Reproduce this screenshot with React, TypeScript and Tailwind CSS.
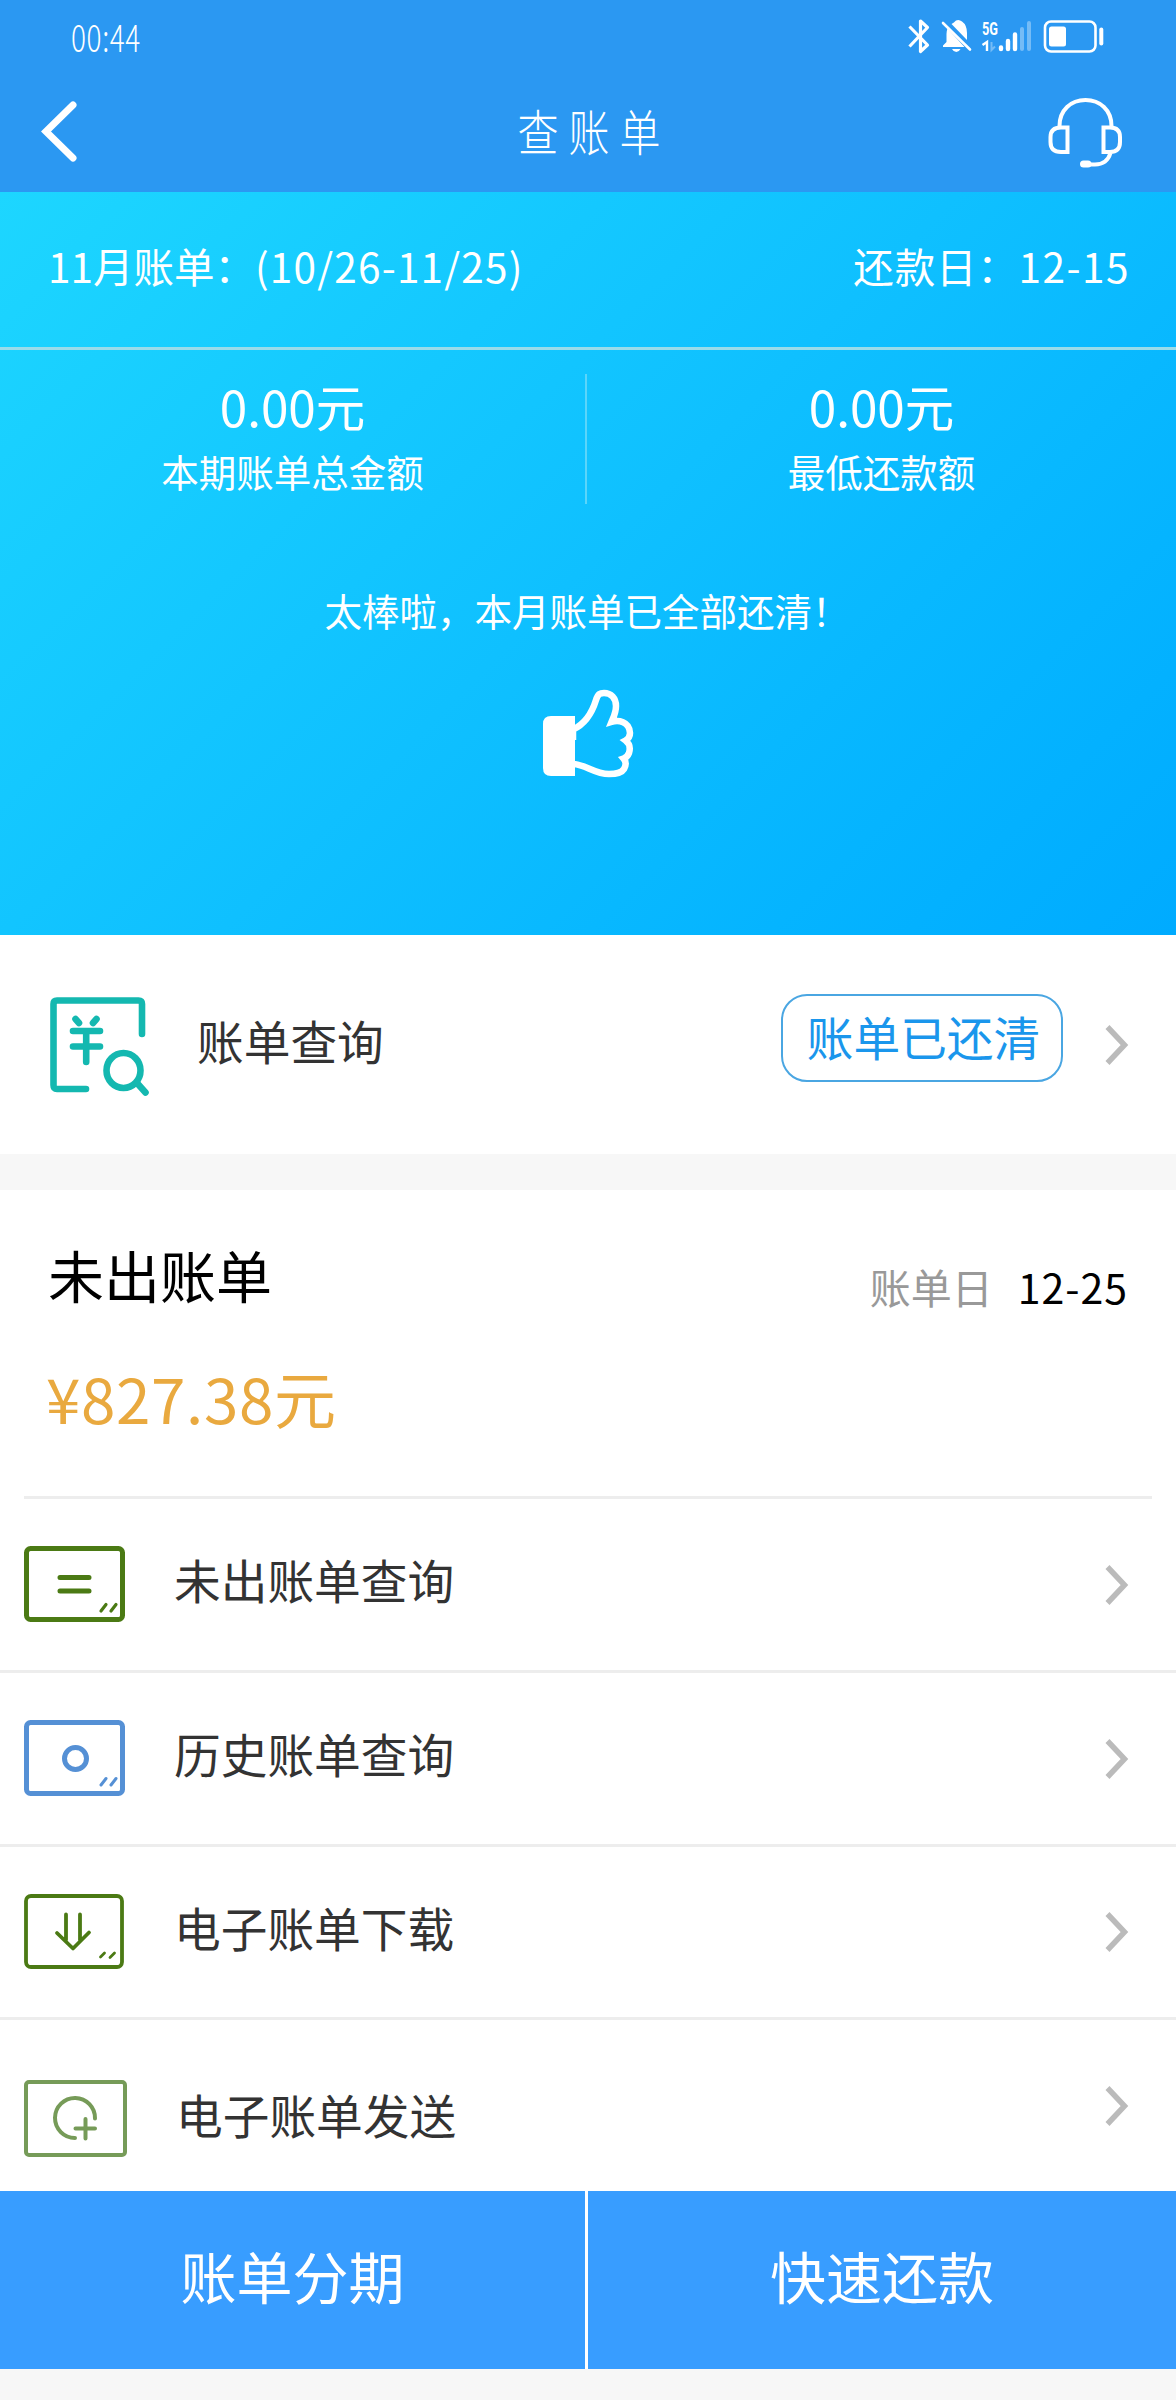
import React from 'react';

type Kind = 'pending' | 'history' | 'download' | 'send';

const menuItems: { label: string; kind: Kind; row: string; text: string }[] = [
    { label: '未出账单查询', kind: 'pending', row: 'h-[174px] border-b-3', text: 'ml-[46px] pb-[11px]' },
    { label: '历史账单查询', kind: 'history', row: 'h-[174px] border-b-3', text: 'ml-[46px] pb-[11px]' },
    { label: '电子账单下载', kind: 'download', row: 'h-[173px] border-b-3', text: 'ml-[46px] pb-[10px]' },
    { label: '电子账单发送', kind: 'send', row: 'h-[171px]', text: 'ml-[48px] pt-[17px]' },
];

function StatusIcons() {
    return (
        <svg width="200" height="40" viewBox="906 16 200 40" fill="none" stroke="#fff">
            {/* bluetooth */}
            <path d="M909.5 26.5 927.5 45 920.5 51.5V21L927.5 27.5 909.5 46.5" strokeWidth="3.2" strokeLinejoin="round" />
            {/* muted bell */}
            <g stroke="none" fill="#fff">
                <path d="M947.5 28.5 964.5 47H943V45.5L946.5 42V34Q946.5 31 947.5 28.5Z" />
                <path d="M951.5 24Q954 22.5 956 20.500Q959 19 962 21.500Q967 25 967 33V40Z" />
                <path d="M952 49h8.500q-1.500 3-4.200 3t-4.300-3Z" />
            </g>
            <path d="m943 23 27 26.500" strokeWidth="2.600" strokeLinecap="round" />
            {/* signal */}
            <text x="982" y="34.500" fontSize="18.5" fontWeight="700" textLength="16" lengthAdjust="spacingAndGlyphs" fill="#fff" stroke="none" fontFamily="Roboto, sans-serif">5G</text>
            <path d="M982.500 45 987 42V51" strokeWidth="2.400" />
            <path d="M991.500 42V50L995 46.500" strokeWidth="2" opacity=".35" />
            <path d="M1001 47.500v1.500M1008 41v8M1015 34.500v14.500" strokeWidth="4.400" strokeLinecap="round" />
            <path d="M1022 29v20M1029 23v26" strokeWidth="4" strokeLinecap="round" opacity=".35" />
            {/* battery */}
            <rect x="1045" y="21.500" width="50.500" height="30" rx="6" strokeWidth="2.600" />
            <rect x="1049" y="26.500" width="17" height="20" rx="2.500" fill="#fff" stroke="none" />
            <path d="M1101.300 29.500V43.500" strokeWidth="4" strokeLinecap="round" />
        </svg>
    );
}

function Headset() {
    return (
        <svg width="78" height="74" viewBox="1046 94 78 74" fill="none" stroke="#fff" strokeWidth="4">
            <path d="M1059.500 125C1059.500 109 1071 99 1085.500 99S1111.500 109 1111.500 125" />
            <path d="M1067.500 126.500v24.500H1061Q1050.500 151 1050.500 141V136Q1050.500 126.500 1061 126.500Z" />
            <path d="M1103.500 126.500v24.500H1110Q1120 151 1120 141V136Q1120 126.500 1110 126.500Z" />
            <path d="M1110.500 152Q1107 163.500 1095 163.500H1086" />
            <path d="M1083.500 163H1088" strokeWidth="7" strokeLinecap="round" />
        </svg>
    );
}

function ThumbUp() {
    return (
        <svg width="92" height="90" viewBox="542 689 92 90" fill="none" stroke="#fff" strokeWidth="6.500">
            <path d="M575 716V776H551Q543 776 543 768V724Q543 716 551 716Z" fill="#fff" stroke="none" />
            <path d="M573 740V729.500C585 724 592 713 596 700C598 693.500 600 693 604 693C611 693 616 698 616 706C616 713 613.500 717 611.500 722C618 720 629.500 721 630 733Q630 738 625.500 740.500Q631.500 745 629 753Q627.500 757 623.500 758.500Q627.500 763 624 769C621 774 613 774 609 774C594 774 586 764.500 573 764" strokeLinejoin="miter" />
        </svg>
    );
}

function BillSearchIcon() {
    return (
        <svg width="102" height="102" viewBox="49 996 102 102" fill="none" stroke="#14b8b0" strokeWidth="6.600" strokeLinecap="round" strokeLinejoin="round">
            <path d="M142 1034V1004Q142 1000.500 138.500 1000.500H57Q53.500 1000.500 53.500 1004V1085Q53.500 1089 57 1089H86" />
            <path d="m75.500 1019 3.500 4M96.500 1019l-3.500 4M73 1031H100M73 1046.500H100M86.200 1032V1062" />
            <ellipse cx="123.500" cy="1070.500" rx="17" ry="17.500" />
            <path d="m137 1083 8.500 9.500" />
        </svg>
    );
}

function Chevron({ className = '' }: { className?: string }) {
    return (
        <svg className={className} width="24" height="42" viewBox="0 0 24 42" fill="none" stroke="#bbb" strokeWidth="5.500">
            <path d="M2.500 3 19.500 21 2.500 39" />
        </svg>
    );
}

function CardIcon({ kind }: { kind: Kind }) {
    if (kind === 'pending') {
        return (
            <svg width="104" height="77" fill="none" stroke="#4b7a14" strokeWidth="5" strokeLinecap="round">
                <rect x="2.500" y="2.500" width="96" height="71" rx="4" />
                <path d="M36 31.500H65M36 45H65" />
                <path d="m77 65 5-6.500M87 65l5-6.500" strokeWidth="3.200" />
            </svg>
        );
    }
    if (kind === 'history') {
        return (
            <svg width="104" height="77" fill="none" stroke="#5590d5" strokeWidth="5" strokeLinecap="round">
                <rect x="2.500" y="2.500" width="96" height="71" rx="4" />
                <circle cx="51.500" cy="38.500" r="11" />
                <path d="m77 65 5-6.500M87 65l5-6.500" strokeWidth="3" />
            </svg>
        );
    }
    if (kind === 'download') {
        return (
            <svg width="104" height="77" fill="none" stroke="#4b7a14" strokeWidth="3.800" strokeLinecap="round" strokeLinejoin="round">
                <rect x="2" y="2" width="96" height="71" rx="5" />
                <path d="M42 20.500V46M56 20.500V46M33 39 49 54.500 65 38.500" />
                <path d="m76.500 63 4-4M86 63.500l4.500-4.500" strokeWidth="2.800" />
            </svg>
        );
    }
    return (
        <svg width="104" height="78" fill="none" stroke="#769b58" strokeWidth="4" strokeLinecap="round">
            <rect x="2" y="2" width="99" height="73" rx="3" />
            <path d="M71 38.500A20 20 0 1 0 51 58" />
            <path d="M51.500 48.500H71M61.500 39V58.500" />
        </svg>
    );
}

function Amount({ label, width }: { label: string; width: string }) {
    return (
        <div className={`${width} flex flex-col items-center`}>
            <div className="mt-[28px] text-[49.5px] leading-[56px]">0.00元</div>
            <div className="mt-[15px] text-[37.5px] leading-[44px]">{label}</div>
        </div>
    );
}

export default function App() {
    return (
        <div className="w-[1176px] h-[2400px] overflow-hidden flex flex-col bg-[#f7f7f7] font-['Noto_Sans_CJK_SC',sans-serif] whitespace-nowrap">
            <header className="h-[192px] shrink-0 bg-[#2b98f2] text-white">
                <div className="h-[72px] flex items-center justify-between pl-[71px] pr-[70px]">
                    <span className="text-[28px] tracking-[0.6px] font-light scale-y-[1.35] origin-center">00:44</span>
                    <StatusIcons />
                </div>
                <div className="h-[120px] flex items-center justify-between pl-[40px] pr-[52px]">
                    <svg width="78" height="64" fill="none" stroke="#fff" strokeWidth="7" strokeLinecap="round">
                        <path d="M33 5 6 31.500 33 58" />
                    </svg>
                    <h1 className="pl-[24px] pb-[3px] text-[41px] font-light tracking-[10px] scale-y-[1.2]">查账单</h1>
                    <Headset />
                </div>
            </header>

            <section className="h-[743px] shrink-0 bg-linear-135 from-[#1dd6ff] via-[#0fc0ff] to-[#00abff] text-white">
                <div className="h-[158px] flex items-center justify-between pl-[48px] pr-[46px] pb-[7px] border-b-3 border-[#9adcea] text-[40.5px]">
                    <span>11月账单：<span className="tracking-[1.2px]">(10/26-11/25)</span></span>
                    <span>
                        <span className="tracking-[0.8px]">还款日：</span>
                        <span className="tracking-[1.5px]">12-15</span>
                    </span>
                </div>
                <div className="h-[180px] flex">
                    <Amount label="本期账单总金额" width="w-[585px]" />
                    <div className="w-[2px] h-[130px] mt-[24px] bg-[#5bd5fa]" />
                    <Amount label="最低还款额" width="flex-1" />
                </div>
                <p className="mt-[52px] -ml-[2px] text-center text-[37.5px] leading-[56px]">太棒啦，本月账单已全部还清！</p>
                <div className="mt-[51px] flex justify-center">
                    <ThumbUp />
                </div>
            </section>

            <section className="h-[219px] shrink-0 flex items-center bg-white pl-[49px] pr-[47px]">
                <div className="pt-[5px]">
                    <BillSearchIcon />
                </div>
                <span className="ml-[46px] pb-[9px] text-[46.7px] text-[#333]">账单查询</span>
                <div className="ml-auto mb-[13px] w-[282px] h-[88px] rounded-[26px] border-2 border-[#4aa6e2] flex items-center justify-center pb-[4px] pl-[3px] text-[46.7px] text-[#1a96ec]">
                    账单已还清
                </div>
                <Chevron className="ml-[42px]" />
            </section>

            <section className="mt-[36px] h-[1001px] shrink-0 bg-white overflow-hidden">
                <div className="h-[309px] mx-[24px] px-[24px] border-b-3 border-[#ededed]">
                    <div className="pt-[44px] flex justify-between">
                        <h2 className="text-[56px] leading-[80px] text-black">未出账单</h2>
                        <div className="pt-[25px] text-[41px] leading-[54px] text-black">
                            <span className="mr-[25px] text-[#999]">账单日</span>
                            <span className="tracking-[1px]">12-25</span>
                        </div>
                    </div>
                    <div className="mt-[38px] -ml-[2px] text-[62px] leading-[90px] tracking-[0.6px] text-[#e9a93f]">¥827.38元</div>
                </div>

                {menuItems.map((item) => (
                    <div key={item.kind} className={`${item.row} flex items-center border-[#ededed] pl-[24px] pr-[47px]`}>
                        <div className={item.kind === 'send' ? 'pt-[26px]' : ''}>
                            <CardIcon kind={item.kind} />
                        </div>
                        <span className={`${item.text} text-[46.7px] text-[#333]`}>{item.label}</span>
                        <Chevron className="ml-auto" />
                    </div>
                ))}
            </section>

            <footer className="h-[178px] shrink-0 flex bg-[#389dff] text-white text-[56px]">
                <button className="w-[588px] border-r-3 border-white pb-[10px]">账单分期</button>
                <button className="flex-1 pb-[10px]">快速还款</button>
            </footer>
        </div>
    );
}
